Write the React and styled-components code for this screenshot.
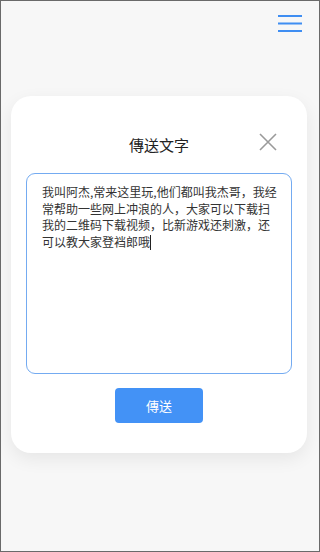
import React from "react";
import styled, { createGlobalStyle } from "styled-components";

const GlobalStyle = createGlobalStyle`
  * {
    box-sizing: border-box;
  }
  body {
    margin: 0;
    background: #f7f7f7;
    font-family: "Noto Sans CJK SC", "Noto Sans", sans-serif;
  }
`;

const message =
  "我叫阿杰,常来这里玩,他们都叫我杰哥，我经常帮助一些网上冲浪的人，大家可以下载扫我的二维码下载视频，比新游戏还刺激，还可以教大家登裆郎哦";

const App = () => {
  return (
    <Page>
      <GlobalStyle />
      <TopBar>
        <MenuButton aria-label="menu">
          <svg width="24" height="18" viewBox="0 0 24 18">
            <rect x="0" y="0" width="24" height="2" fill="#3f8ef2" />
            <rect x="0" y="7.5" width="24" height="2" fill="#3f8ef2" />
            <rect x="0" y="15" width="24" height="2" fill="#3f8ef2" />
          </svg>
        </MenuButton>
      </TopBar>
      <Card>
        <CardHeader>
          <Title>傳送文字</Title>
          <CloseButton aria-label="close">
            <svg width="18" height="18" viewBox="0 0 18 18">
              <path
                d="M1 1 L17 17 M17 1 L1 17"
                stroke="#9a9a9a"
                strokeWidth="1.6"
                fill="none"
              />
            </svg>
          </CloseButton>
        </CardHeader>
        <TextBox>
          {message}
          <Caret />
        </TextBox>
        <SendButton>傳送</SendButton>
      </Card>
    </Page>
  );
};

export default App;

const Page = styled.div`
  min-height: 552px;
  border: 1px solid #6a6a6a;
  background: #f7f7f7;
`;

const TopBar = styled.div`
  height: 48px;
  display: flex;
  justify-content: flex-end;
  padding: 14px 17px 0 0;
`;

const MenuButton = styled.button`
  border: none;
  background: none;
  padding: 0;
  width: 24px;
  height: 18px;
  display: flex;
  cursor: pointer;
`;

const Card = styled.div`
  width: 296px;
  margin: 47px 0 0 10px;
  background: #ffffff;
  border-radius: 20px;
  box-shadow: 0 6px 18px rgba(0, 0, 0, 0.07);
  padding: 36px 15px 30px;
  display: flex;
  flex-direction: column;
  align-items: center;
`;

const CardHeader = styled.div`
  position: relative;
  width: 100%;
  height: 24px;
  margin-bottom: 17px;
  display: flex;
  justify-content: center;
  align-items: center;
`;

const Title = styled.h3`
  margin: 0;
  font-size: 15px;
  font-weight: 400;
  color: #222;
`;

const CloseButton = styled.button`
  position: absolute;
  right: 15px;
  top: 1px;
  border: none;
  background: none;
  padding: 0;
  width: 18px;
  height: 18px;
  display: flex;
`;

const TextBox = styled.div`
  width: 100%;
  height: 201px;
  border: 1px solid #74abf1;
  border-radius: 9px;
  padding: 10px 12px 10px 15px;
  font-size: 12px;
  line-height: 16.7px;
  color: #333;
  word-break: break-all;
`;

const Caret = styled.span`
  display: inline-block;
  width: 1px;
  height: 15px;
  background: #222;
  vertical-align: -3px;
`;

const SendButton = styled.button`
  margin-top: 14px;
  width: 88px;
  height: 35px;
  border: none;
  border-radius: 4px;
  background: #4392f6;
  color: #fff;
  font-family: "Noto Sans CJK SC", "Noto Sans", sans-serif;
  font-size: 13px;
  cursor: pointer;
`;
